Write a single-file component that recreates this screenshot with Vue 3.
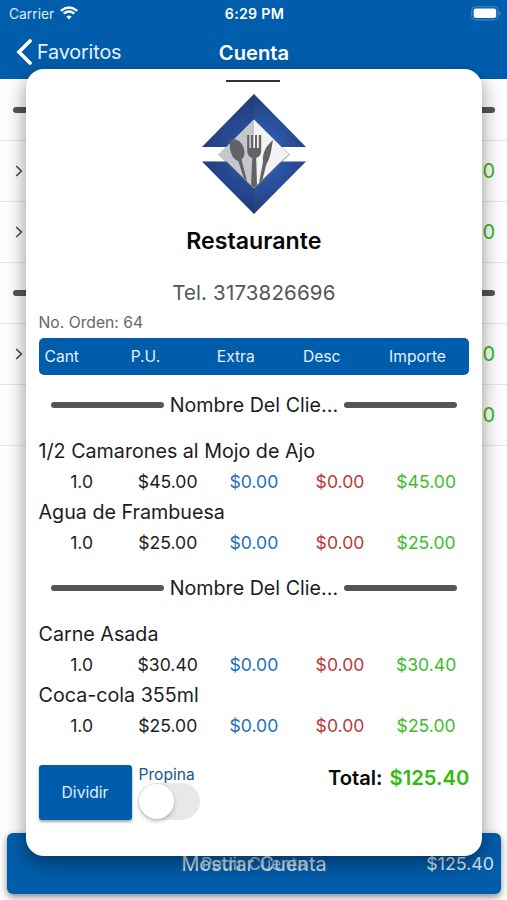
<script setup>
const background = [
  { type: 'divider' },
  { type: 'item', chevron: true },
  { type: 'item', chevron: true },
  { type: 'divider' },
  { type: 'item', chevron: true },
  { type: 'item', chevron: false },
]
const columns = ['Cant', 'P.U.', 'Extra', 'Desc', 'Importe']
const clients = [
  {
    name: 'Nombre Del Clie...',
    items: [
      { name: '1/2 Camarones al Mojo de Ajo', qty: '1.0', price: '$45.00', extra: '$0.00', desc: '$0.00', total: '$45.00' },
      { name: 'Agua de Frambuesa', qty: '1.0', price: '$25.00', extra: '$0.00', desc: '$0.00', total: '$25.00' },
    ],
  },
  {
    name: 'Nombre Del Clie...',
    items: [
      { name: 'Carne Asada', qty: '1.0', price: '$30.40', extra: '$0.00', desc: '$0.00', total: '$30.40' },
      { name: 'Coca-cola 355ml', qty: '1.0', price: '$25.00', extra: '$0.00', desc: '$0.00', total: '$25.00' },
    ],
  },
]
</script>

<template>
  <div class="screen">
    <header class="top">
      <div class="status">
        <div class="carrier">
          <span>Carrier</span>
          <svg class="wifi" viewBox="0 0 18 14">
            <path d="M9 13.4 L6.3 10.4 Q9 8.4 11.7 10.4 Z" fill="#fff" />
            <path d="M3.7 7.7 Q9 3.4 14.3 7.7" fill="none" stroke="#fff" stroke-width="2.3" />
            <path d="M0.8 4.8 Q9 -1.9 17.2 4.8" fill="none" stroke="#fff" stroke-width="2.3" />
          </svg>
        </div>
        <span class="time">6:29 PM</span>
        <svg class="battery" viewBox="0 0 31 15">
          <rect x="0.7" y="0.7" width="26.4" height="13.2" rx="4" fill="none" stroke="#4488c4" stroke-width="1.1" />
          <rect x="2.6" y="2.6" width="22.6" height="9.4" rx="2.2" fill="#fff" />
          <path d="M28.6 5 Q30.6 7.3 28.6 9.6 Z" fill="#6ea3d3" />
        </svg>
      </div>
      <nav class="nav">
        <div class="back">
          <svg class="back-icon" viewBox="0 0 16 26"><path d="M14 2 L3 13 L14 24" fill="none" stroke="#fff" stroke-width="3.7" stroke-linecap="round" /></svg>
          <span>Favoritos</span>
        </div>
        <h1 class="title">Cuenta</h1>
      </nav>
    </header>

    <main class="list">
      <div v-for="(row, i) in background" :key="i" class="list-row">
        <div v-if="row.type === 'divider'" class="rule"></div>
        <template v-else>
          <svg class="chevron" viewBox="0 0 8 12"><path d="M1.2 1 L6.4 6 L1.2 11" fill="none" :stroke="row.chevron ? '#444' : 'none'" stroke-width="1.5" /></svg>
          <span class="list-price">0</span>
        </template>
      </div>
    </main>

    <button class="show-bill">
      <span class="label label-large">Mostrar Cuenta</span>
      <span class="label label-small">Pedir Cuenta</span>
      <span class="bill-total">$125.40</span>
    </button>

    <section class="sheet">
      <div class="handle"></div>
      <svg class="logo" viewBox="0 0 104 120">
        <defs>
          <radialGradient id="blue" gradientUnits="userSpaceOnUse" cx="54" cy="60" r="60">
            <stop offset="0.35" stop-color="#2c5bab" />
            <stop offset="0.65" stop-color="#284e97" />
            <stop offset="1" stop-color="#243d74" />
          </radialGradient>
        </defs>
        <path d="M52 0 L104 53 H0 Z" fill="url(#blue)" />
        <path d="M0 67.5 H104 L52 120 Z" fill="url(#blue)" />
        <path d="M52 0 L0 53 H26 L52 27 Z M0 67.5 H26 L52 94 V120 Z" fill="#172b62" opacity="0.2" />
        <path d="M52 26 L88 60.5 L52 95.5 L16 60.5 Z" fill="#777" opacity="0.5" />
        <path d="M52 25.5 L86.5 60 L52 94 L17.5 60 Z" fill="#f3f3f4" />
        <path d="M52 25.5 V94 L17.5 60 Z" fill="#c6c7ca" />
        <g fill="#626366">
          <path d="M29 46 C33 43.5 39 47 41 52 C44 59 42 64 39.5 65.5 L45 87 L41.5 83.5 L36.3 67 C31 66 28 58 27.8 53 C27.7 49 28 47 29 46 Z" />
          <path d="M45.2 41 H47.2 V54 H49 V41 H51 V54 H53 V41 H55 V54 H56.8 V41 H59.2 V56 C59.2 61 57 63 54.2 64 L55 91 L52 94 L49 91 L50.2 64 C47 63 45.2 60.5 45.2 56 Z" />
          <path d="M71 46 C69 58 68 65 64.5 70 L60.5 85.5 L57 89 L61 68 C60 58 65 51 71 46 Z" />
        </g>
      </svg>
      <h2 class="name">Restaurante</h2>
      <p class="phone">Tel. 3173826696</p>
      <p class="order">No. Orden: 64</p>
      <div class="grid head">
        <span v-for="c in columns" :key="c">{{ c }}</span>
      </div>
      <div v-for="(client, i) in clients" :key="i">
        <div class="client">
          <span class="bar"></span>
          <span class="client-name">{{ client.name }}</span>
          <span class="bar"></span>
        </div>
        <div v-for="item in client.items" :key="item.name">
          <div class="item-name">{{ item.name }}</div>
          <div class="grid values">
            <span>{{ item.qty }}</span>
            <span>{{ item.price }}</span>
            <span class="blue">{{ item.extra }}</span>
            <span class="red">{{ item.desc }}</span>
            <span class="green">{{ item.total }}</span>
          </div>
        </div>
      </div>
      <footer class="foot">
        <button class="split">Dividir</button>
        <div class="tip">
          <span class="tip-label">Propina</span>
          <div class="switch"><div class="knob"></div></div>
        </div>
        <div class="total"><span>Total:</span><span class="total-value">$125.40</span></div>
      </footer>
    </section>
  </div>
</template>

<style>
body { margin: 0; }
</style>

<style scoped>
.screen {
  position: relative;
  display: flex;
  flex-direction: column;
  width: 507px;
  height: 900px;
  overflow: hidden;
  background: #fdfdfd;
  color: #1c1c1e;
  font-family: Inter, "Liberation Sans", sans-serif;
  white-space: nowrap;
}
.screen * { box-sizing: border-box; }
h1, h2, p { margin: 0; font-weight: inherit; }
button { border: 0; padding: 0; color: #fff; font-family: inherit; }
.top { flex: none; height: 79px; background: #005dab; color: #fff; }
.status {
  display: grid;
  grid-template-columns: 1fr auto 1fr;
  align-items: center;
  height: 27px;
  padding: 0 5px 0 9px;
  font-size: 13.8px;
}
.carrier { display: flex; align-items: center; gap: 6px; color: #dfeaf5; }
.wifi { width: 18px; height: 14px; margin-top: -2px; }
.time { margin-right: 2px; font-size: 14.2px; font-weight: 600; letter-spacing: 0.3px; }
.battery { width: 31px; height: 15px; margin-top: -1px; justify-self: end; }
.nav {
  display: grid;
  grid-template-columns: 1fr auto 1fr;
  align-items: center;
  height: 50px;
  padding: 0 15px 0 16px;
  font-size: 19.8px;
}
.back { display: flex; align-items: center; gap: 5px; color: #e8f1f9; letter-spacing: -0.15px; }
.back-icon { width: 16px; height: 26px; }
.title { font-size: 20.2px; font-weight: 600; }
.list { flex: none; margin-top: 0.8px; }
.list-row {
  display: flex;
  align-items: center;
  justify-content: space-between;
  height: 61px;
  padding: 1px 12px 0 15px;
  border-bottom: 1px solid #e6e6e6;
}
.rule { flex: 1; height: 6px; margin-left: -2px; border-radius: 3px; background: #555; }
.chevron { width: 8px; height: 12px; }
.list-price { font-size: 20px; color: #36b91e; }
.show-bill {
  display: grid;
  grid-template-columns: 1fr;
  align-items: center;
  width: 494px;
  height: 61px;
  margin: auto 0 6px 7px;
  padding-right: 7px;
  border-radius: 6px;
  background: #005dab;
  box-shadow: 0 3px 7px rgba(0, 0, 0, 0.45);
}
.show-bill > * { grid-area: 1 / 1; }
.label { justify-self: center; margin-left: 7px; color: #d5e0ec; }
.label-large { font-size: 19.8px; }
.label-small { font-size: 17.3px; opacity: 0.8; }
.bill-total { justify-self: end; font-size: 17.8px; color: #dbe6f1; }
.sheet {
  position: absolute;
  left: 26px;
  top: 69px;
  display: flex;
  flex-direction: column;
  width: 455.5px;
  height: 787.3px;
  padding: 11px 12.3px 0 12.5px;
  border-radius: 18px;
  background: #fff;
  box-shadow: 0 7px 19px rgba(0, 0, 0, 0.42);
}
.handle { flex: none; align-self: center; width: 54px; height: 2px; margin-right: 1px; background: #333; }
.logo { flex: none; align-self: center; width: 104px; height: 120px; margin-top: 12px; }
.name { margin-top: 10.6px; height: 32px; line-height: 32px; text-align: center; font-size: 23.2px; font-weight: 600; color: #080808; }
.phone { margin-top: 20px; height: 32px; line-height: 32px; text-align: center; font-size: 20.5px; letter-spacing: 0.15px; color: #555; }
.order { margin-top: 4.2px; height: 20px; line-height: 20px; font-size: 15.7px; color: #666; }
.grid { display: grid; grid-template-columns: repeat(5, 1fr); align-items: center; }
.head {
  height: 37px;
  margin-top: 4.8px;
  padding-top: 1px;
  border-radius: 5px;
  background: #005dab;
  color: #e6eff7;
  font-size: 15.6px;
}
.head span { padding-left: 6px; }
.client { display: flex; align-items: center; justify-content: space-between; height: 61.2px; padding: 0 12px; }
.bar { width: 113px; height: 6px; border-radius: 3px; background: #555; }
.client-name { font-size: 19.7px; }
.item-name { height: 30.5px; line-height: 30.5px; font-size: 19.7px; }
.values { height: 30.5px; padding-bottom: 0.4px; text-align: center; font-size: 17.6px; }
.blue { color: #2270b8; }
.red { color: #b83a38; }
.green { color: #40bc2d; }
.foot { display: flex; margin-top: 24px; }
.split {
  width: 93px;
  height: 55px;
  padding-top: 1px;
  border-radius: 3px;
  background: #005dab;
  color: #e6eff7;
  font-size: 15.6px;
  box-shadow: 0 2px 3px rgba(0, 0, 0, 0.35);
}
.tip { margin-left: 6px; }
.tip-label { display: block; height: 18px; margin-left: 1px; line-height: 19px; font-size: 15.6px; color: #20548c; }
.switch { width: 62px; height: 37px; padding: 1px; border-radius: 19px; background: #e8e8e8; }
.knob { width: 35px; height: 35px; border-radius: 50%; background: #fff; box-shadow: 0 2px 4px rgba(0, 0, 0, 0.25); }
.total { display: flex; gap: 7px; margin-left: auto; height: 26px; line-height: 26px; font-size: 20.2px; font-weight: 600; color: #080808; }
.total-value { color: #2fbb12; }
</style>
